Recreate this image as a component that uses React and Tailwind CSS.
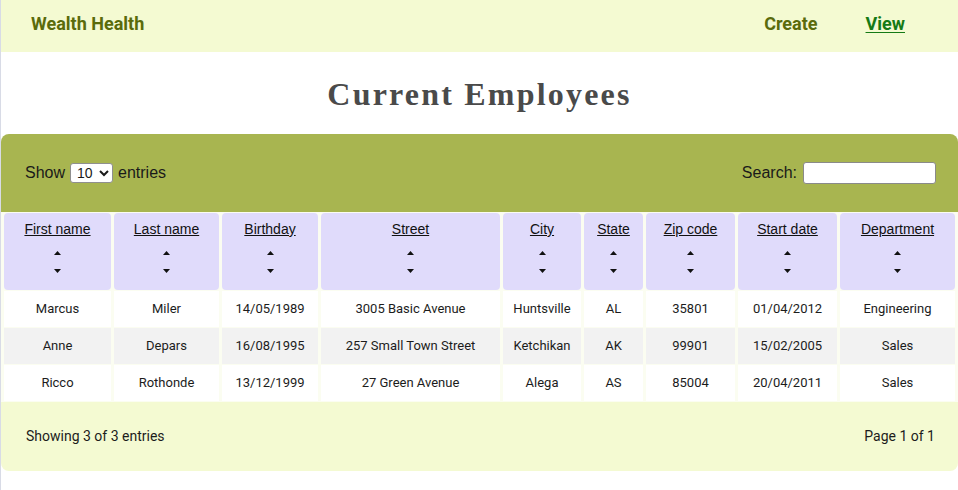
import React from "react";

const columns = [
  { label: "First name", w: "w-[107px]" },
  { label: "Last name", w: "w-[105px]" },
  { label: "Birthday", w: "w-[96px]" },
  { label: "Street", w: "w-[179px]" },
  { label: "City", w: "w-[78px]" },
  { label: "State", w: "w-[59px]" },
  { label: "Zip code", w: "w-[89px]" },
  { label: "Start date", w: "w-[99px]" },
  { label: "Department", w: "w-auto" },
];

const employees = [
  ["Marcus", "Miler", "14/05/1989", "3005 Basic Avenue", "Huntsville", "AL", "35801", "01/04/2012", "Engineering"],
  ["Anne", "Depars", "16/08/1995", "257 Small Town Street", "Ketchikan", "AK", "99901", "15/02/2005", "Sales"],
  ["Ricco", "Rothonde", "13/12/1999", "27 Green Avenue", "Alega", "AS", "85004", "20/04/2011", "Sales"],
];

function SortArrows() {
  return (
    <div className="mt-[14px] flex flex-col items-center gap-[14px]">
      <svg width="7" height="4" viewBox="0 0 7 4">
        <path d="M3.5 0 L7 4 L0 4 Z" fill="#111" />
      </svg>
      <svg width="7" height="4" viewBox="0 0 7 4">
        <path d="M0 0 L7 0 L3.5 4 Z" fill="#111" />
      </svg>
    </div>
  );
}

export default function App() {
  return (
    <div className="min-h-[490px] w-[958px] border-l border-[#d8dbe6] bg-white font-['Roboto',sans-serif]">
      {/* header */}
      <header className="flex h-[52px] items-center justify-between bg-[#f4fad2] pb-[6px] pl-[30px] pr-[53px]">
        <h1 className="text-[18px] font-bold text-[#5a6b0b]">Wealth Health</h1>
        <nav className="flex items-center gap-[48px] text-[18px] font-bold">
          <a className="text-[#5a6b0b]">Create</a>
          <a className="text-[#157a15] underline underline-offset-2">View</a>
        </nav>
      </header>

      <h2 className="pt-[21px] pb-[19px] text-center font-['Liberation_Serif',serif] text-[32px] font-bold leading-[42px] tracking-[2.2px] text-[#4a4a4a]">
        Current Employees
      </h2>

      {/* table panel */}
      <div className="w-[957px]">
        <div className="flex h-[78px] items-center justify-between rounded-t-[8px] bg-[#a8b550] pl-[24px] pr-[22px] font-['Liberation_Sans',sans-serif] text-[16px] text-[#1a1a1a]">
          <label className="flex items-center gap-[5px]">
            Show
            <select className="h-[20px] w-[43px] rounded-[3px] border border-[#8f8f8f] bg-white pl-[2px] text-[14px] text-[#1a1a1a]">
              <option>10</option>
              <option>25</option>
              <option>50</option>
            </select>
            entries
          </label>
          <label className="flex items-center gap-[6px]">
            Search:
            <input className="h-[22px] w-[133px] rounded-[3px] border border-[#8a8a8a] bg-white" />
          </label>
        </div>

        <table className="w-full table-fixed border-separate border-spacing-x-[3px] border-spacing-y-[1px] bg-[#fbfdf1]">
          <thead>
            <tr>
              {columns.map((c) => (
                <th
                  key={c.label}
                  className={`${c.w} h-[77px] rounded-[4px] bg-[#e0dbfb] p-0 align-top font-['Liberation_Sans',sans-serif] text-[14px] font-normal text-[#111]`}
                >
                  <div className="pt-[8px] leading-[16px] underline">{c.label}</div>
                  <SortArrows />
                </th>
              ))}
            </tr>
          </thead>
          <tbody>
            {employees.map((row, i) => (
              <tr key={i} className={i % 2 === 1 ? "bg-[#f2f2f2]" : "bg-white"}>
                {row.map((cell, j) => (
                  <td key={j} className="h-[36px] p-0 text-center text-[13px] text-[#1c1c1c]">
                    {cell}
                  </td>
                ))}
              </tr>
            ))}
          </tbody>
        </table>

        <div className="flex h-[69px] items-center justify-between rounded-b-[8px] bg-[#f4fad2] pl-[25px] pr-[23px] text-[14px] text-[#1c1c1c]">
          <span>Showing 3 of 3 entries</span>
          <span>Page 1 of 1</span>
        </div>
      </div>
    </div>
  );
}
